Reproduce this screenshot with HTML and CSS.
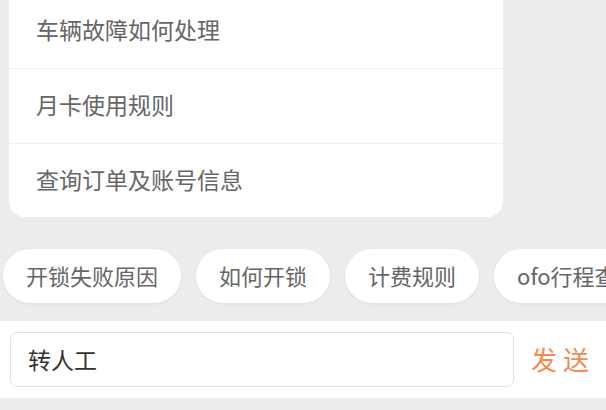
FILE: index.html
```html
<!DOCTYPE html>
<html lang="zh-CN">
<head>
    <meta charset="UTF-8">
    <meta name="viewport" content="width=device-width, initial-scale=1.0">
    <title>客服</title>
    <link rel="stylesheet" href="styles.css">
</head>
<body>
    <div class="page">
        <!-- 常见问题 -->
        <div class="faq-card">
            <div class="faq-item">车辆故障如何处理</div>
            <div class="faq-item">月卡使用规则</div>
            <div class="faq-item">查询订单及账号信息</div>
        </div>

        <!-- 快捷问题 -->
        <div class="quick-list">
            <span class="chip">开锁失败原因</span>
            <span class="chip">如何开锁</span>
            <span class="chip">计费规则</span>
            <span class="chip">ofo行程查询</span>
        </div>

        <!-- 输入栏 -->
        <div class="input-bar">
            <div class="input-box">转人工</div>
            <div class="send-btn">发送</div>
        </div>
    </div>
</body>
</html>
```

FILE: styles.css
```css
body {
    margin: 0;
    background-color: #ececec;
    font-family: "Noto Sans CJK SC", "Noto Sans", sans-serif;
    overflow: hidden;
}
.page {
    width: 606px;
    height: 410px;
    overflow: hidden;
}
.faq-card {
    margin: -6px 103px 0 9px;
    background-color: #fff;
    border-radius: 0 0 16px 16px;
}
.faq-item {
    height: 74px;
    line-height: 70px;
    padding-left: 27px;
    font-size: 23px;
    color: #666;
    border-bottom: 1px solid #f0f0f0;
}
.faq-item:last-child {
    border-bottom: none;
    height: 73px;
}
.quick-list {
    display: flex;
    gap: 15px;
    margin-top: 32px;
    padding-left: 3px;
    white-space: nowrap;
}
.chip {
    flex: none;
    height: 54px;
    line-height: 52px;
    padding: 0 23px;
    font-size: 22px;
    color: #666;
    background-color: #fff;
    border-radius: 27px;
    box-shadow: 0 1px 3px rgba(0, 0, 0, 0.06);
}
.input-bar {
    display: flex;
    align-items: center;
    margin-top: 18px;
    height: 77px;
    background-color: #fff;
}
.input-box {
    box-sizing: border-box;
    width: 504px;
    height: 55px;
    line-height: 52px;
    margin-left: 10px;
    padding-left: 17px;
    font-size: 23px;
    color: #333;
    border: 1px solid #e2e2e2;
    border-radius: 7px;
}
.send-btn {
    flex: 1;
    text-align: center;
    padding-left: 6px;
    padding-bottom: 3px;
    font-size: 26px;
    letter-spacing: 6px;
    color: #f5884e;
}
```
